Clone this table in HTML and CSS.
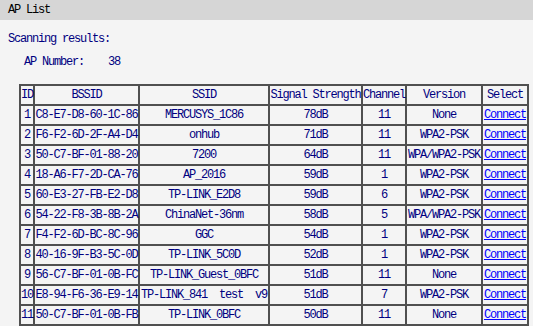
FILE: index.html
```html
<!DOCTYPE html>
<html>
<head>
<meta charset="utf-8">
<link rel="stylesheet" href="styles.css">
</head>
<body>
<div class="title">AP List</div>
<div class="content">
  <div class="scan">Scanning results:</div>
  <div class="apnum"><span class="lbl">AP Number:</span><span>38</span></div>
  <table class="aps">
    <colgroup>
      <col class="c-id"><col class="c-bssid"><col class="c-ssid"><col class="c-sig"><col class="c-ch"><col class="c-ver"><col class="c-sel">
    </colgroup>
    <tr><th>ID</th><th>BSSID</th><th>SSID</th><th>Signal Strength</th><th>Channel</th><th>Version</th><th>Select</th></tr>
    <tr><td>1</td><td>C8-E7-D8-60-1C-86</td><td>MERCUSYS_1C86</td><td>78dB</td><td>11</td><td>None</td><td><a href="#">Connect</a></td></tr>
    <tr><td>2</td><td>F6-F2-6D-2F-A4-D4</td><td>onhub</td><td>71dB</td><td>11</td><td>WPA2-PSK</td><td><a href="#">Connect</a></td></tr>
    <tr><td>3</td><td>50-C7-BF-01-88-20</td><td>7200</td><td>64dB</td><td>11</td><td>WPA/WPA2-PSK</td><td><a href="#">Connect</a></td></tr>
    <tr><td>4</td><td>18-A6-F7-2D-CA-76</td><td>AP_2016</td><td>59dB</td><td>1</td><td>WPA2-PSK</td><td><a href="#">Connect</a></td></tr>
    <tr><td>5</td><td>60-E3-27-FB-E2-D8</td><td>TP-LINK_E2D8</td><td>59dB</td><td>6</td><td>WPA2-PSK</td><td><a href="#">Connect</a></td></tr>
    <tr><td>6</td><td>54-22-F8-3B-8B-2A</td><td>ChinaNet-36nm</td><td>58dB</td><td>5</td><td>WPA/WPA2-PSK</td><td><a href="#">Connect</a></td></tr>
    <tr><td>7</td><td>F4-F2-6D-BC-8C-96</td><td>GGC</td><td>54dB</td><td>1</td><td>WPA2-PSK</td><td><a href="#">Connect</a></td></tr>
    <tr><td>8</td><td>40-16-9F-B3-5C-0D</td><td>TP-LINK_5C0D</td><td>52dB</td><td>1</td><td>WPA2-PSK</td><td><a href="#">Connect</a></td></tr>
    <tr><td>9</td><td>56-C7-BF-01-0B-FC</td><td>TP-LINK_Guest_0BFC</td><td>51dB</td><td>11</td><td>None</td><td><a href="#">Connect</a></td></tr>
    <tr><td>10</td><td>E8-94-F6-36-E9-14</td><td class="pre">TP-LINK_841  test  v9</td><td>51dB</td><td>7</td><td>WPA2-PSK</td><td><a href="#">Connect</a></td></tr>
    <tr><td>11</td><td>50-C7-BF-01-0B-FB</td><td>TP-LINK_0BFC</td><td>50dB</td><td>11</td><td>None</td><td><a href="#">Connect</a></td></tr>
  </table>
</div>
</body>
</html>
```
FILE: styles.css
```css
html, body {
  margin: 0;
  padding: 0;
  background: #f4f4f4;
  font-family: "Liberation Mono", "DejaVu Sans Mono", monospace;
  font-size: 12px;
  letter-spacing: -1.2px;
  color: #000080;
}
.title {
  height: 20px;
  line-height: 20px;
  background: #d6d6d6;
  color: #000;
  padding-left: 8px;
}
.content {
  padding: 11px 0 0 8px;
}
.scan {
  line-height: 16px;
  height: 16px;
}
.apnum {
  margin-top: 7px;
  padding-left: 16px;
  line-height: 16px;
  height: 16px;
  display: flex;
}
.apnum .lbl {
  width: 84px;
}
.aps {
  margin-top: 14px;
  margin-left: 11px;
  border-collapse: collapse;
  table-layout: fixed;
  width: 508px;
  border: 2px solid #505050;
}
.aps th, .aps td {
  border: 2px solid #505050;
  height: 18px;
  padding: 0;
  text-align: center;
  font-weight: normal;
  white-space: nowrap;
  overflow: visible;
  line-height: 18px;
}
.aps .pre { white-space: pre; }
.c-id { width: 14px; }
.c-bssid { width: 105px; }
.c-ssid { width: 130px; }
.c-sig { width: 93px; }
.c-ch { width: 44px; }
.c-ver { width: 76px; }
.c-sel { width: 46px; }
.aps a {
  color: #0000ff;
  text-decoration: underline;
}
```
